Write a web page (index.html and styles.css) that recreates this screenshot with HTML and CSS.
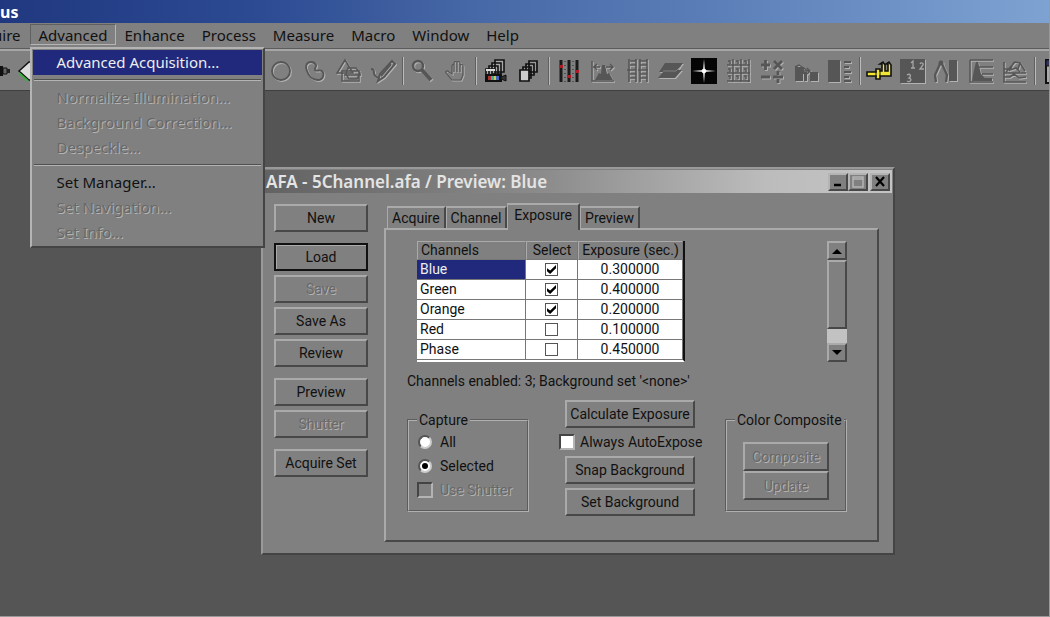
FILE: index.html
```html
<!DOCTYPE html>
<html lang="en">
<head>
<meta charset="utf-8">
<title>Image analysis - Advanced Acquisition</title>
<link rel="stylesheet" href="styles.css">
</head>
<body>
<div class="app">
  <header class="app-title">us</header>
  <nav class="menubar">
    <button class="menu cut">uire</button>
    <div class="menu-holder">
      <button class="menu open">Advanced</button>
      <div class="popup">
        <button class="item active">Advanced Acquisition...</button>
        <hr>
        <button class="item" disabled>Normalize Illumination...</button>
        <button class="item" disabled>Background Correction...</button>
        <button class="item" disabled>Despeckle...</button>
        <hr>
        <button class="item">Set Manager...</button>
        <button class="item" disabled>Set Navigation...</button>
        <button class="item" disabled>Set Info...</button>
      </div>
    </div>
    <button class="menu">Enhance</button>
    <button class="menu">Process</button>
    <button class="menu">Measure</button>
    <button class="menu">Macro</button>
    <button class="menu">Window</button>
    <button class="menu">Help</button>
  </nav>

  <div class="toolbar">
    <div class="tools-left">
      <svg class="plug" viewBox="0 0 12 26"><path d="M0 8h3v10H0z" fill="#111"/><path d="M3 10h4v6H3z" fill="#666" stroke="#111"/><path d="M7 11h3v4H7z" fill="#222"/></svg>
      <svg class="wedge" viewBox="0 0 26 26"><path d="M2 13L12 4h12v18H12z" fill="#ddd" stroke="#111" stroke-width="1.5"/><path d="M2 15l9 8" stroke="#3fae3f" stroke-width="2"/></svg>
    </div>
    <button class="tool off" aria-label="Ellipse"><svg viewBox="0 0 26 26"><circle cx="13" cy="13" r="9" fill="none" stroke="currentColor" stroke-width="1.8"/></svg></button>
    <button class="tool off" aria-label="Freeform"><svg viewBox="0 0 26 26"><path d="M9 4c-5 0-6 5-4 9 2 6 6 9 11 9 5 0 7-6 4-9-3-2-5 1-7-1-1-2 2-3 1-5-1-2-2-3-5-3z" fill="none" stroke="currentColor" stroke-width="1.8"/></svg></button>
    <button class="tool off" aria-label="Shapes"><svg viewBox="0 0 26 26"><path d="M9 2L1 15h16zM6 13h17v10H6z M8 17h17M12 10h8l4 5-3 6h-8l-3-5z" fill="none" stroke="currentColor" stroke-width="1.5"/></svg></button>
    <button class="tool off" aria-label="Brush"><svg viewBox="0 0 26 26"><path d="M22 3l3 3-11 13-6 4 2-7z" fill="none" stroke="currentColor" stroke-width="2"/><path d="M21 6L11 18M1 11c3 0 3 2 3 4s1 3 4 5" stroke="currentColor" stroke-width="2" fill="none"/></svg></button>
    <span class="sep"></span>
    <button class="tool off" aria-label="Zoom"><svg viewBox="0 0 26 26"><circle cx="9" cy="8" r="5" fill="none" stroke="currentColor" stroke-width="2.400"/><path d="M13 12l9 10" stroke="currentColor" stroke-width="4"/></svg></button>
    <button class="tool off" aria-label="Pan"><svg viewBox="0 0 26 26"><path d="M9 22l-6-7c-1-2 1-3 3-1l3 2V8c0-2 2-2 2 0V5c0-2 3-2 3 0 0-2 3-2 3 0v3c0-2 3-2 3 0v9l-2 5zM11 8v6M14 5v9M17 7v7" fill="none" stroke="currentColor" stroke-width="1.2"/></svg></button>
    <span class="sep"></span>
    <button class="tool" aria-label="Capture sequence"><svg viewBox="0 0 26 26"><g fill="#aaa" stroke="#111" stroke-width="1.6"><path d="M13 2h9v12h-9zM10 5h9v11h-9zM7 8h9v10H7zM4 11h9v8H4z"/></g><path d="M4 12h9" stroke="#ddd" stroke-width="2"/><path d="M3 16h17v8H3z" fill="#111"/><path d="M19 19l5-2v6l-5-2z" fill="#333" stroke="#111"/><path d="M6 18h3v4H6z" fill="#a33"/><path d="M9 18h3v4H9z" fill="#4a9"/><path d="M12 18h2v4h-2z" fill="#cc5"/><path d="M14 18h3v4h-3z" fill="#46b"/></svg></button>
    <button class="tool" aria-label="Sequence"><svg viewBox="0 0 26 26"><g fill="#999" stroke="#111" stroke-width="1.7"><path d="M13 3h8v11h-8zM10 6h8v11h-8zM7 9h8v11H7z"/><path d="M4 12h9v11H4z" fill="#ccc"/></g></svg></button>
    <span class="sep"></span>
    <button class="tool" aria-label="Contrast"><svg viewBox="0 0 26 26"><path d="M6 2v22M14 2v22M22 2v22" stroke="#1a1a1a" stroke-width="3"/><path d="M10 3v21M18 3v21" stroke="#444" stroke-width="1.5" stroke-dasharray="1 3"/><path d="M4 7h4v3H4zM12 17h4v3h-4zM20 12h4v3h-4z" fill="#b01c24"/></svg></button>
    <button class="tool off" aria-label="Histogram"><svg viewBox="0 0 26 26"><path d="M3 3v20h22" fill="none" stroke="currentColor" stroke-width="1.5"/><path d="M6 22l4-7 2 1 1-9h3l2 9 2-1 4 7z" fill="currentColor"/><path d="M4 9h7M8 6L5 9l3 3M17 9h7M21 6l3 3-3 3" stroke="currentColor" stroke-width="1.5" fill="none"/></svg></button>
    <button class="tool off" aria-label="Lookup table"><svg viewBox="0 0 26 26"><path d="M6 1v23M13 1v23M17 1v23M24 1v23" stroke="currentColor" stroke-width="1.6"/><path d="M7 3h6M7 7h6M4 12h9M7 16h6M7 20h6M17 3h7M17 7h7M15 12h10M17 16h7M17 20h7" stroke="currentColor" stroke-width="1.600"/></svg></button>
    <button class="tool off" aria-label="Layers"><svg viewBox="0 0 26 26"><path d="M8 5h18l-5 7h4l-7 8H1l5-6H2z" fill="currentColor"/><path d="M6 13h13l4-4" stroke="#808080" fill="none"/></svg></button>
    <button class="tool" aria-label="Fourier transform"><svg viewBox="0 0 26 26"><path d="M0 0h26v26H0z" fill="#050505"/><path d="M13 1l1 11 11 1-11 1-1 11-1-11-11-1 11-1z" fill="#ddd"/><circle cx="13" cy="13" r="2.3" fill="#fff"/></svg></button>
    <button class="tool off" aria-label="Filter kernel"><svg viewBox="0 0 26 26"><path d="M2 7h23M2 15h23M2 23h23M8 1v23M16 1v23M24 1v23" stroke="currentColor" stroke-width="1.500"/><path d="M3 3h2v3M11 3h2v3M19 3h2v3M3 11h2v3M11 11h2v3M19 11h2v3M3 18h2v3M11 18h2v3M19 18h2v3" fill="none" stroke="currentColor" stroke-width="1.500"/></svg></button>
    <button class="tool off" aria-label="Arithmetic"><svg viewBox="0 0 26 26"><path d="M2 7h9M6.500 2v10M15 3l8 8M23 3l-8 8M2 19h9M14 19h10M19 13v4M19 21v4" stroke="currentColor" stroke-width="2.800"/></svg></button>
    <button class="tool off" aria-label="Align"><svg viewBox="0 0 26 26"><path d="M2 9h9v5h3v9h-3v-7h-1v7H2zM17 14h8v9h-8z" fill="currentColor"/><path d="M2 9l4-2 9 6M11 13h6M14 10l3 3-3 3" stroke="currentColor" stroke-width="1.5" fill="none"/></svg></button>
    <button class="tool off" aria-label="Calibration"><svg viewBox="0 0 26 26"><path d="M1 2h12v22H1zM17 3h7v2h-7zM17 8h5v2h-5zM17 13h7v2h-7zM17 18h5v2h-5zM17 22h7v2h-7z" fill="currentColor"/></svg></button>
    <span class="sep"></span>
    <button class="tool" aria-label="Measurements"><svg viewBox="0 0 26 26"><path d="M1 14h9v-3h4v2h2V6h-2l3-2 2 3v6h3V6h-2l3-2 2 3v11H14v3h-4v-3H1z" fill="#f2e635" stroke="#111" stroke-width="1.600"/><path d="M10 13v6M14 13v5" stroke="#111"/></svg></button>
    <button class="tool off" aria-label="Count"><svg viewBox="0 0 26 26"><path d="M0 1h25v24H0z" fill="currentColor"/><g fill="none" stroke="#a6a6a6" stroke-width="1.300"><path d="M11 5l2-2v7M11 10h4M20 6c1-2 4-1 3 1l-3 4h4M7 17c3-2 5 1 2 3 4 1 1 5-2 3"/></g></svg></button>
    <button class="tool off" aria-label="Compass"><svg viewBox="0 0 26 26"><circle cx="7" cy="5" r="2.500" fill="currentColor"/><path d="M6 6L1 17l1 7M8 6l5 11-1 7" stroke="currentColor" stroke-width="2.300" fill="none"/><path d="M15 2h8v21h-8z" fill="currentColor"/></svg></button>
    <button class="tool off" aria-label="Line profile"><svg viewBox="0 0 26 26"><path d="M2 2v22h23M2 2h23M11 9h14M14 16h11" fill="none" stroke="currentColor" stroke-width="1.500"/><path d="M4 23l2-11 2-8h2l3 12 4 4h7v3z" fill="currentColor"/></svg></button>
    <button class="tool off" aria-label="Surface plot"><svg viewBox="0 0 26 26"><path d="M2 4v20h22M2 11h5M2 15h22M2 19h6l4-3 5 4 7-1M4 14l9-10 5 1 5 8M12 4l-4 8 6-2 4 4M18 5l-2 6" fill="none" stroke="currentColor" stroke-width="1.600"/></svg></button>
    <span class="sep"></span>
    <button class="tool" aria-label="Data table"><svg viewBox="0 0 26 26"><path d="M5 2h20v23H5z" fill="#aaa" stroke="#111" stroke-width="2"/><path d="M5 2h20v6H5z" fill="#336" stroke="#111"/></svg></button>
  </div>

  <main class="workspace">
    <section class="dialog">
      <header class="dialog-title">
        <h1>AFA - 5Channel.afa / Preview: Blue</h1>
        <div class="window-buttons">
          <button class="wb" aria-label="Minimize"><svg viewBox="0 0 14 12"><path d="M3 9h7" stroke="#000" stroke-width="2.500"/></svg></button>
          <button class="wb" aria-label="Maximize" disabled><svg viewBox="0 0 14 12"><path d="M2 1h10v10H2zM2 3h10" fill="none" stroke="#b4b4b4" stroke-width="1.500"/></svg></button>
          <button class="wb close" aria-label="Close"><svg viewBox="0 0 14 12"><path d="M3 1l8 9M11 1l-8 9" stroke="#000" stroke-width="2.200"/></svg></button>
        </div>
      </header>
      <div class="dialog-body">
        <div class="side">
          <div class="stack"><button class="btn">New</button></div>
          <div class="stack">
            <button class="btn default">Load</button>
            <button class="btn" disabled>Save</button>
            <button class="btn">Save As</button>
            <button class="btn">Review</button>
          </div>
          <div class="stack">
            <button class="btn">Preview</button>
            <button class="btn" disabled>Shutter</button>
          </div>
          <div class="stack"><button class="btn">Acquire Set</button></div>
        </div>

        <div class="tabs">
          <div class="tab-row" role="tablist">
            <button class="tab" role="tab">Acquire</button>
            <button class="tab" role="tab">Channel</button>
            <button class="tab current" role="tab" aria-selected="true">Exposure</button>
            <button class="tab" role="tab">Preview</button>
          </div>
          <div class="panel">
            <div class="grid-row">
              <table class="channels">
                <thead><tr><th class="name">Channels</th><th class="pick">Select</th><th class="value">Exposure (sec.)</th></tr></thead>
                <tbody>
                  <tr><td class="name chosen">Blue</td><td class="pick"><input type="checkbox" class="tick" aria-label="Blue" checked></td><td class="value">0.300000</td></tr>
                  <tr><td class="name">Green</td><td class="pick"><input type="checkbox" class="tick" aria-label="Green" checked></td><td class="value">0.400000</td></tr>
                  <tr><td class="name">Orange</td><td class="pick"><input type="checkbox" class="tick" aria-label="Orange" checked></td><td class="value">0.200000</td></tr>
                  <tr><td class="name">Red</td><td class="pick"><input type="checkbox" class="tick" aria-label="Red"></td><td class="value">0.100000</td></tr>
                  <tr><td class="name">Phase</td><td class="pick"><input type="checkbox" class="tick" aria-label="Phase"></td><td class="value">0.450000</td></tr>
                </tbody>
              </table>
              <div class="scroll">
                <button class="arrow" aria-label="Scroll up"><svg viewBox="0 0 10 6"><path d="M0 6l5-5 5 5z"/></svg></button>
                <div class="thumb"></div>
                <div class="track"></div>
                <button class="arrow" aria-label="Scroll down"><svg viewBox="0 0 10 6"><path d="M0 0l5 5 5-5z"/></svg></button>
              </div>
            </div>
            <p class="status">Channels enabled: 3; Background set '&lt;none&gt;'</p>
            <div class="controls">
              <fieldset class="group capture">
                <legend>Capture</legend>
                <label class="choice"><input type="radio" name="capture" class="dot"><span>All</span></label>
                <label class="choice"><input type="radio" name="capture" class="dot" checked><span>Selected</span></label>
                <label class="choice dim"><input type="checkbox" class="box" disabled><span>Use Shutter</span></label>
              </fieldset>
              <div class="actions">
                <button class="btn">Calculate Exposure</button>
                <label class="auto"><input type="checkbox" class="box"><span>Always AutoExpose</span></label>
                <button class="btn">Snap Background</button>
                <button class="btn">Set Background</button>
              </div>
              <fieldset class="group composite">
                <legend>Color Composite</legend>
                <button class="btn" disabled>Composite</button>
                <button class="btn" disabled>Update</button>
              </fieldset>
            </div>
          </div>
        </div>
      </div>
    </section>
  </main>
</div>
</body>
</html>
```
FILE: styles.css
```css
:root {
  --face: #808080;
  --light: #b4b4b4;
  --dark: #484848;
  --navy: #20297c;
}

* { box-sizing: border-box; }

body {
  margin: 0;
  overflow: hidden;
  background: #555;
  color: #111;
  font: 15px/20px "Noto Sans", "Open Sans", sans-serif;
  white-space: nowrap;
}

button {
  margin: 0;
  padding: 0;
  border: 0;
  border-radius: 0;
  background: var(--face);
  color: inherit;
  font: inherit;
}

svg { display: block; }

.app {
  display: flex;
  flex-direction: column;
  height: 100vh;
  border-right: 1px solid #999;
  border-bottom: 1px solid #999;
}

.app-title {
  height: 23px;
  padding-top: 2px;
  color: #fff;
  font-size: 16px;
  font-weight: 700;
  background: linear-gradient(90deg, #20387f 0%, #2c4b93 25%, #4768a6 45%, #5a7db7 67%, #7ea3d2 100%);
}

/* Menu bar */
.menubar {
  display: flex;
  align-items: flex-start;
  gap: 1px;
  height: 26px;
  padding-top: 1px;
  background: var(--face);
  border-bottom: 1px solid #5c5c5c;
}

.menu { height: 21px; padding: 0 8px; line-height: 20px; }
.menu.cut { margin-left: -15px; }
.menu-holder { position: relative; }
.menu.open {
  border: 1px solid;
  border-color: #606060 var(--light) var(--light) #606060;
  padding: 0 7px 0 8px;
}

.popup {
  position: absolute;
  z-index: 5;
  top: 23px;
  left: 0;
  width: 235px;
  padding: 1px;
  background: var(--face);
  border: 2px solid;
  border-color: var(--light) #444 #444 var(--light);
}

.item {
  display: block;
  width: 100%;
  height: 25px;
  padding: 0 0 2px 24px;
  text-align: left;
}
.item.active { background: var(--navy); color: #eee; }
.popup hr {
  height: 2px;
  margin: 4px 1px;
  border: 0;
  border-top: 1px solid #505050;
  border-bottom: 1px solid var(--light);
}

button:disabled, .dim {
  color: #686868;
  text-shadow: 1px 1px 0 #b4b4b4;
}

/* Toolbar */
.toolbar {
  display: flex;
  align-items: center;
  height: 42px;
  overflow: hidden;
  background: var(--face);
  border-top: 2px solid #a6a6a6;
  border-bottom: 1px solid #404040;
}
.tools-left { display: flex; flex: 0 0 264px; gap: 5px; }
.tools-left svg { height: 26px; }
.plug { width: 12px; }
.wedge { width: 26px; }
.tool { flex: 0 0 34px; padding: 0 4px; }
.tool svg { width: 26px; height: 26px; }
.tool.off { color: #565656; }
.tool.off svg { filter: drop-shadow(1px 1px 0 #b2b2b2); }
.sep {
  flex: 0 0 2px;
  height: 28px;
  margin: 0 1px 0 2px;
  border-left: 1px solid #606060;
  border-right: 1px solid #bbb;
}

/* Dialog window */
.workspace { position: relative; flex: 1; background: #555; }

.dialog {
  position: absolute;
  top: 76px;
  left: 261px;
  width: 634px;
  padding: 1px;
  background: var(--face);
  border: 2px solid;
  border-color: #999 #444 #444 #999;
  font: 14px/20px "Roboto", "Liberation Sans", sans-serif;
}

.dialog-title {
  display: flex;
  align-items: center;
  justify-content: space-between;
  height: 23px;
  padding: 0 2px;
  background: linear-gradient(90deg, #626262, #8c8c8c 45%, #bcbcbc 80%, #c4c4c4);
}
.dialog-title h1 {
  margin: 0;
  color: #e4e4e4;
  font: 600 17px/22px "Noto Sans", "Open Sans", sans-serif;
}
.window-buttons { display: flex; }
.wb {
  display: grid;
  place-items: center;
  width: 20px;
  height: 18px;
  border: 2px solid;
  border-color: var(--light) var(--dark) var(--dark) var(--light);
}
.wb svg { width: 14px; height: 12px; }
.wb.close { margin-left: 2px; }

.dialog-body { display: flex; gap: 16px; padding: 11px 13px 10px 10px; }

.side { display: flex; flex-direction: column; gap: 11px; width: 94px; }
.stack { display: flex; flex-direction: column; gap: 4px; }

.btn {
  height: 28px;
  border: 2px solid;
  border-color: #aaa var(--dark) var(--dark) #aaa;
}
.btn.default { border-color: #111; box-shadow: inset 1px 1px #aaa; }

.tabs { flex: 1; }
.tab-row { display: flex; align-items: flex-end; height: 24px; padding-left: 3px; }
.tab {
  height: 22px;
  padding: 0 4px;
  border: solid;
  border-width: 2px 2px 0 1px;
  border-color: #aaa var(--dark) #aaa #aaa;
}
.tab.current { height: 27px; margin-bottom: -2px; padding: 0 6px 5px; }

.panel {
  padding: 11px 30px 24px 21px;
  border: 2px solid;
  border-color: #aaa var(--dark) var(--dark) #aaa;
}

.grid-row { display: flex; justify-content: space-between; padding-left: 10px; }

.channels {
  border-collapse: separate;
  border-spacing: 0;
  border-right: 2px solid #111;
  border-bottom: 2px solid #fff;
}
.channels th, .channels td {
  height: 20px;
  padding: 0 3px;
  border-right: 1px solid #777;
  border-bottom: 1px solid #777;
  font-weight: 400;
  line-height: 19px;
  text-align: center;
}
.channels th { height: 19px; line-height: 17px; background: var(--face); border-top: 1px solid #aaa; border-left: 1px solid #aaa; }
.channels td { background: #fff; }
.channels .name { width: 109px; text-align: left; }
.channels .pick { width: 52px; }
.channels .value { width: 105px; }
.channels .chosen { background: var(--navy); color: #eee; }

.tick, .box, .dot { appearance: none; margin: 0; display: grid; place-items: center; flex: none; }
.tick { width: 13px; height: 13px; margin: 0 auto; background: #fff; border: 1px solid #555; }
.tick:checked::before {
  content: "";
  width: 9px;
  height: 9px;
  background: #000;
  clip-path: polygon(0 35%, 35% 60%, 100% 0, 100% 35%, 35% 100%, 0 70%);
}
.box {
  width: 16px;
  height: 16px;
  background: #fff;
  border: 2px solid;
  border-color: #444 var(--light) var(--light) #444;
}
.box:disabled { background: var(--face); }
.dot {
  width: 14px;
  height: 14px;
  border: 2px solid;
  border-color: #555 #ccc #ccc #555;
  border-radius: 50%;
  background: #fff;
}
.dot:checked::before { content: ""; width: 6px; height: 6px; border-radius: 50%; background: #000; }

.scroll { display: flex; flex-direction: column; width: 20px; }
.arrow {
  display: grid;
  place-items: center;
  height: 19px;
  border: 2px solid;
  border-color: #aaa var(--dark) var(--dark) #aaa;
}
.arrow svg { width: 10px; height: 6px; }
.thumb {
  flex: 1;
  border: 2px solid;
  border-color: #aaa var(--dark) var(--dark) #aaa;
}
.track { height: 14px; background: #c2c2c2; }

.status { margin: 9px 0; }

.controls { display: flex; justify-content: space-between; align-items: flex-start; }

.group {
  min-width: 0;
  margin: 10px 0 0;
  padding: 0 8px;
  border: 2px groove #b0b0b0;
}
.group legend { padding: 0 2px; }
.capture { width: 122px; padding-bottom: 8px; }
.choice { display: flex; align-items: center; gap: 7px; height: 24px; }
.capture .dot { margin: 0 1px; }

.actions { display: flex; flex-direction: column; gap: 4px; width: 136px; }
.actions .btn { margin-left: 6px; }
.auto { display: flex; align-items: center; gap: 5px; height: 20px; }

.composite { width: 122px; padding: 12px 8px 10px; }
.composite .btn { display: block; width: 86px; height: 29px; margin: 0 auto; }
```
